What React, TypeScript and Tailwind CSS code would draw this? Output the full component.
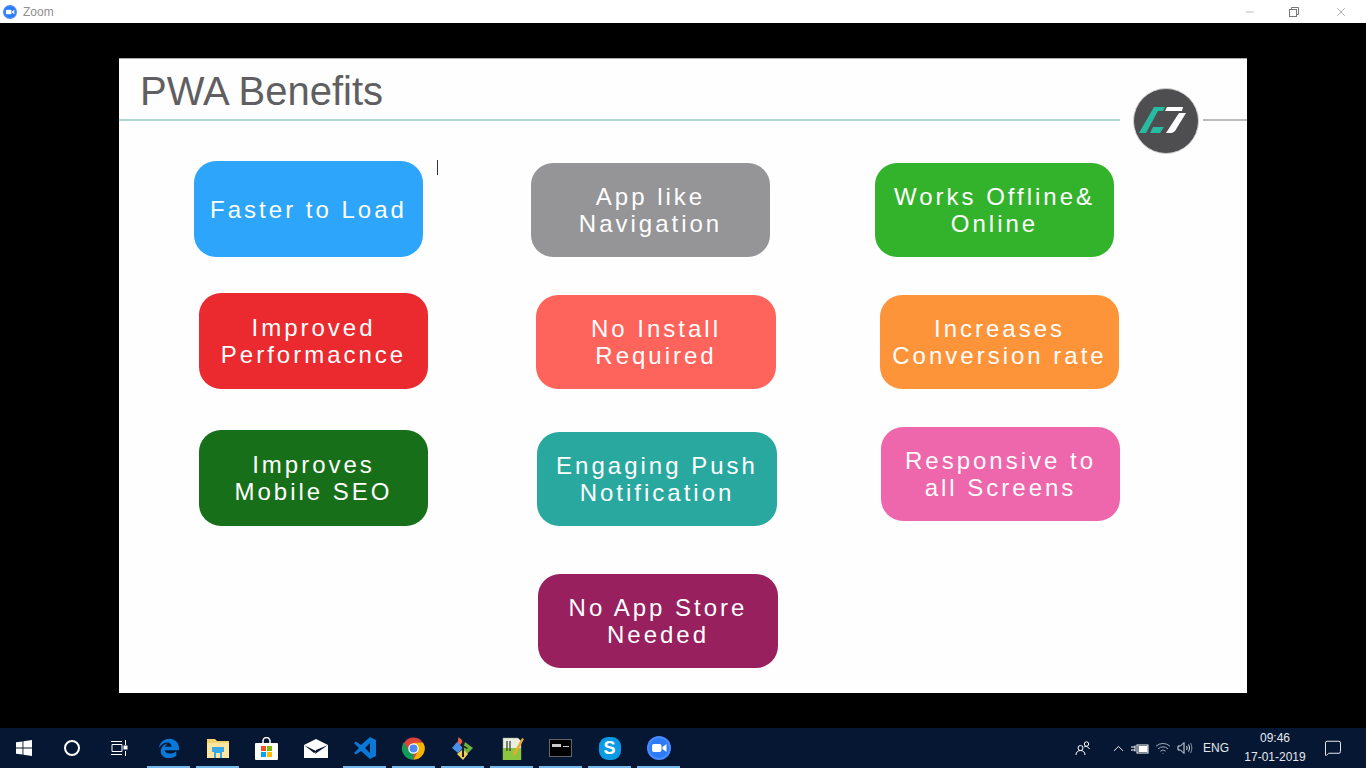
import { Minus, X, ChevronUp, MessageSquare, Wifi } from "lucide-react";

const FONT = "font-['Liberation_Sans',Arial,sans-serif]";

type Card = { lines: string[]; color: string; box: string };

const columns: { offset: string; cards: Card[] }[] = [
  {
    offset: "ml-[75px] w-[234px]",
    cards: [
      { lines: ["Faster to Load"], color: "bg-[#2ca5fb]", box: "mt-[40px] h-[96px] w-[229px]" },
      { lines: ["Improved", "Performacnce"], color: "bg-[#ea2a2e]", box: "mt-[36px] ml-[5px] h-[96px] w-[229px]" },
      { lines: ["Improves", "Mobile SEO"], color: "bg-[#186f19]", box: "mt-[41px] ml-[5px] h-[96px] w-[229px]" },
    ],
  },
  {
    offset: "ml-[103px] w-[247px]",
    cards: [
      { lines: ["App like", "Navigation"], color: "bg-[#959497]", box: "mt-[42px] h-[94px] w-[239px]" },
      { lines: ["No Install", "Required"], color: "bg-[#fe645c]", box: "mt-[38px] ml-[5px] h-[94px] w-[240px]" },
      { lines: ["Engaging Push", "Notification"], color: "bg-[#29a89f]", box: "mt-[43px] ml-[6px] h-[94px] w-[240px]" },
      { lines: ["No App Store", "Needed"], color: "bg-[#98205e]", box: "mt-[48px] ml-[7px] h-[94px] w-[240px]" },
    ],
  },
  {
    offset: "ml-[97px] w-[245px]",
    cards: [
      { lines: ["Works Offline&", "Online"], color: "bg-[#33b32b]", box: "mt-[42px] h-[94px] w-[239px]" },
      { lines: ["Increases", "Conversion rate"], color: "bg-[#fe943a]", box: "mt-[38px] ml-[5px] h-[94px] w-[239px]" },
      { lines: ["Responsive to", "all Screens"], color: "bg-[#ee66ab]", box: "mt-[38px] ml-[6px] h-[94px] w-[239px]" },
    ],
  },
];

function BenefitCard({ card }: { card: Card }) {
  return (
    <div className={`flex flex-col items-center justify-center rounded-[22px] text-[24px] leading-[27px] tracking-[3px] text-white ${card.color} ${card.box}`}>
      {card.lines.map((line) => (
        <div key={line}>{line}</div>
      ))}
    </div>
  );
}

function ZoomIcon({ size = 24 }: { size?: number }) {
  return (
    <svg width={size} height={size} viewBox="0 0 24 24">
      <circle cx="12" cy="12" r="12" fill="#4a8cff" />
      <circle cx="12" cy="12" r="10" fill="#2d7cf6" />
      <rect x="5" y="8" width="9.5" height="8" rx="2" fill="#fff" />
      <path d="M15.5 11l4-3v8l-4-3z" fill="#fff" />
    </svg>
  );
}

function Logo() {
  return (
    <div className="absolute right-[48px] top-[29px] flex h-[66px] w-[66px] items-center justify-center rounded-full border border-[#d0d0d0] bg-[#4e4d4f]">
      <svg width="54" height="32" viewBox="0 0 54 32">
        <path d="M15 2h11l-2 4h-5L7 28H0z" fill="#27bba2" />
        <path d="M11 28l3-6h11l-4 6z" fill="#27bba2" />
        <path d="M28 2h16l-1 4H26z" fill="#fff" />
        <path d="M40 8h7L36 26q-2 2-4 2h-5z" fill="#fff" />
      </svg>
    </div>
  );
}

function Taskbar() {
  return (
    <div className={`flex h-[40px] items-center bg-[#061733] text-white ${FONT}`}>
      <div className="flex w-[48px] justify-center">
        <svg width="16" height="16" viewBox="0 0 16 16" fill="#fff">
          <path d="M0 2.3l6.5-.9v6.2H0zM7.4 1.3L16 0v7.6H7.4zM0 8.4h6.5v6.2L0 13.7zM7.4 8.4H16V16l-8.6-1.3z" />
        </svg>
      </div>
      <div className="flex w-[48px] justify-center">
        <div className="h-[16px] w-[16px] rounded-full border-2 border-white" />
      </div>
      <div className="flex w-[48px] justify-center">
        <svg width="18" height="16" viewBox="0 0 18 16" fill="none" stroke="#fff" strokeWidth="1">
          <path d="M0 1.5h11M0 14.5h11M1 4.5h10v7H1zM14.5 0v5M14.5 11v5" />
          <rect x="13" y="6" width="3" height="3" fill="#fff" />
        </svg>
      </div>
      <TaskIcon active>
        <svg width="22" height="22" viewBox="0 0 24 24">
          <path d="M12.5 2C6 2 1.500 7 1 12c2-3.500 5-5.500 8-6 3-.5 5.500 1 5.800 4.500H7.500c1-2 2.500-3 4-3.500C6.500 7.500 3 11 3 15.500 3 20 6.500 23 11.500 23c3.500 0 6.500-1 8.500-2.500v-5c-2 1.500-4.500 2.500-7.500 2.500-3 0-5-1.500-5.200-3.500H23c.5-7-3.500-12.500-10.500-12.500z" fill="#0a78d7" />
        </svg>
      </TaskIcon>
      <TaskIcon active>
        <svg width="22" height="20" viewBox="0 0 22 20">
          <path d="M0 1h8l2 2h12v17H0z" fill="#f4d26f" />
          <path d="M0 5h22v15H0z" fill="#fce6a0" />
          <path d="M5 9h12v5h-2v6H7v-6H5z" fill="#38a8e6" />
          <rect x="9" y="15" width="4" height="5" fill="#fce6a0" />
        </svg>
      </TaskIcon>
      <TaskIcon>
        <svg width="23" height="23" viewBox="0 0 23 23">
          <path d="M8 6V4a3.500 3.500 0 017 0v2" fill="none" stroke="#fff" strokeWidth="1.500" />
          <rect y="6" width="23" height="17" rx="1" fill="#fff" />
          <rect x="6" y="9" width="5" height="5" fill="#f25022" />
          <rect x="12" y="9" width="5" height="5" fill="#7fba00" />
          <rect x="6" y="15" width="5" height="5" fill="#00a4ef" />
          <rect x="12" y="15" width="5" height="5" fill="#ffb900" />
        </svg>
      </TaskIcon>
      <TaskIcon>
        <svg width="24" height="19" viewBox="0 0 24 19">
          <path d="M0 6L12 0l12 6v13H0z" fill="#fff" />
          <path d="M0 6l12 6 5-2-7 4z" fill="#061733" />
          <path d="M24 6l-12 5-1 4z" fill="#061733" />
        </svg>
      </TaskIcon>
      <TaskIcon active>
        <svg width="24" height="24" viewBox="0 0 24 24">
          <path d="M17 1l6 3v16l-6 3-9-8-5 3.500L1 17l5-5-5-5 2-1.500L8 9z" fill="#0a78d7" />
          <path d="M17 7l-5 5 5 5z" fill="#061733" />
        </svg>
      </TaskIcon>
      <TaskIcon active>
        <svg width="23" height="23" viewBox="0 0 24 24">
          <circle cx="12" cy="12" r="11.500" fill="#db4437" />
          <path d="M12 12L2 18a11.500 11.500 0 0010 5.500z" fill="#0f9d58" />
          <path d="M12 12l-10 6 10 5.500L22 8z" fill="#0f9d58" opacity="0" />
          <path d="M12 6h10a11.500 11.500 0 01-10 17.500L17 14z" fill="#f4b400" />
          <path d="M2 5.500L7 14l5 9.500A11.500 11.500 0 012 5.500z" fill="#0f9d58" />
          <circle cx="12" cy="12" r="5.500" fill="#fff" />
          <circle cx="12" cy="12" r="4.200" fill="#4c8bf5" />
        </svg>
      </TaskIcon>
      <TaskIcon active>
        <svg width="24" height="24" viewBox="0 0 24 24">
          <path d="M8 1l4 4-2 3-5 4z" fill="#e8604c" transform="rotate(-5 8 6)" />
          <path d="M6 6l6 6-5 5-6-5z" fill="#4a90e8" />
          <path d="M14 6l8 6-6 6-4-5z" fill="#6db33f" />
          <path d="M12 13l5 5-5 6-6-6z" fill="#f2cf5b" />
          <path d="M11 3l2 2v16h-2z" fill="#222" />
          <path d="M12 9l5 3-1 1-4-2z" fill="#222" />
        </svg>
      </TaskIcon>
      <TaskIcon active>
        <svg width="24" height="24" viewBox="0 0 24 24">
          <path d="M3 2h15l3 3v19H3z" fill="#e9eedd" stroke="#8d9b79" strokeWidth=".5" />
          <path d="M3 12h18v12H3z" fill="#8cc63f" />
          <path d="M7 5v10M10 5v10" stroke="#333" strokeWidth="1.200" />
          <path d="M22 2l2 1-8 15-3 2 1-4z" fill="#f0a830" />
        </svg>
      </TaskIcon>
      <TaskIcon active>
        <div className="flex h-[18px] w-[23px] flex-col border border-[#666] bg-black px-[2px] pt-[4px]">
          <div className="h-[3px] w-[9px] bg-[#c9c9c9]" />
          <div className="ml-[11px] mt-[-1px] h-[1px] w-[6px] bg-[#c9c9c9]" />
        </div>
      </TaskIcon>
      <TaskIcon active>
        <div className="flex h-[23px] w-[22px] items-center justify-center rounded-[9px] bg-[#0a9ae6] text-[18px] font-bold text-white">S</div>
      </TaskIcon>
      <TaskIcon active>
        <ZoomIcon size={24} />
      </TaskIcon>

      <div className="ml-auto flex items-center text-[12px] text-[#e4e8ee]">
        <svg width="16" height="16" viewBox="0 0 16 16" fill="none" stroke="#fff" strokeWidth="1" className="mr-[19px]">
          <circle cx="5.500" cy="8" r="2.500" />
          <path d="M1 15c0-3 2-4.500 4.500-4.500S10 12 10 15" />
          <circle cx="11.500" cy="4" r="2.200" />
          <path d="M9 7c1-.7 4-1 5.500 2" />
        </svg>
        <ChevronUp size={17} strokeWidth={1.300} color="#fff" className="mr-[4px]" />
        <svg width="18" height="11" viewBox="0 0 18 11" fill="none" stroke="#fff" className="mr-[6px]">
          <rect x="6" y="2" width="11" height="8" />
          <rect x="8" y="3.500" width="8" height="5" fill="#fff" />
          <path d="M0 4h4M0 7h4M4 2.500v6" />
        </svg>
        <Wifi size={16} strokeWidth={1.300} color="#b9c0ca" className="mr-[6px]" />
        <svg width="16" height="14" viewBox="0 0 16 14" fill="none" stroke="#dfe3e8" strokeWidth="1" className="mr-[10px]">
          <path d="M1 5h2.500L7 1.500v11L3.500 9H1z" />
          <path d="M9.500 5c.8 1.200.8 3 0 4M11.500 3.500c1.300 2 1.300 5 0 7" />
          <path d="M13.500 2c1.800 3 1.800 7 0 10" stroke="#8a93a0" />
        </svg>
        <span className="w-[36px] text-[12px]">ENG</span>
        <div className="flex w-[72px] flex-col items-center text-[12px] leading-[19px]">
          <span>09:46</span>
          <span>17-01-2019</span>
        </div>
        <MessageSquare size={18} strokeWidth={1.200} color="#fff" className="ml-[13px] mr-[24px]" />
      </div>
    </div>
  );
}

function TaskIcon({ children, active }: { children: React.ReactNode; active?: boolean }) {
  return (
    <div className="relative flex h-[40px] w-[49px] items-center justify-center">
      {children}
      {active && <div className="absolute bottom-0 left-[3px] right-[3px] h-[2px] bg-[#76b9ed]" />}
    </div>
  );
}

export default function App() {
  return (
    <div className={`flex h-[768px] w-[1366px] flex-col overflow-hidden bg-black ${FONT}`}>
      {/* Zoom window title bar */}
      <div className="flex h-[23px] items-center bg-white pl-[3px]">
        <ZoomIcon size={14} />
        <span className="ml-[6px] text-[12px] text-[#8f8f8f]">Zoom</span>
        <div className="ml-auto flex items-center">
          <Minus size={12} strokeWidth={1} color="#777" className="mr-[33px]" />
          <svg width="10" height="10" viewBox="0 0 10 10" fill="none" stroke="#777" className="mr-[35px]">
            <rect x=".5" y="2.500" width="7" height="7" />
            <path d="M2.500 2.500v-2h7v7h-2" />
          </svg>
          <X size={14} strokeWidth={1} color="#777" className="mr-[18px]" />
        </div>
      </div>

      <div className="flex flex-1 justify-center pt-[35px] pb-[35px] pl-[0px]">
        {/* Shared slide */}
        <div className="relative h-[635px] w-[1128px] border-t border-[#a9a9a9] bg-[#fefefe]">
          <div className="flex h-[60px] items-center pl-[21px] pt-[4px] text-[40px] text-[#5f5f62]">PWA Benefits</div>
          <div className="flex h-[2px] items-center">
            <div className="h-[1.500px] w-[1001px] bg-[#acd6d2]" />
            <div className="ml-[83px] h-[1.500px] flex-1 bg-[#bdbcc0]" />
          </div>
          <Logo />
          <div className="absolute left-[318px] top-[101px] h-[15px] w-[1px] bg-[#333]" />
          <div className="flex">
            {columns.map((col) => (
              <div key={col.offset} className={`flex flex-col ${col.offset}`}>
                {col.cards.map((card) => (
                  <BenefitCard key={card.lines[0]} card={card} />
                ))}
              </div>
            ))}
          </div>
        </div>
      </div>

      <Taskbar />
    </div>
  );
}
